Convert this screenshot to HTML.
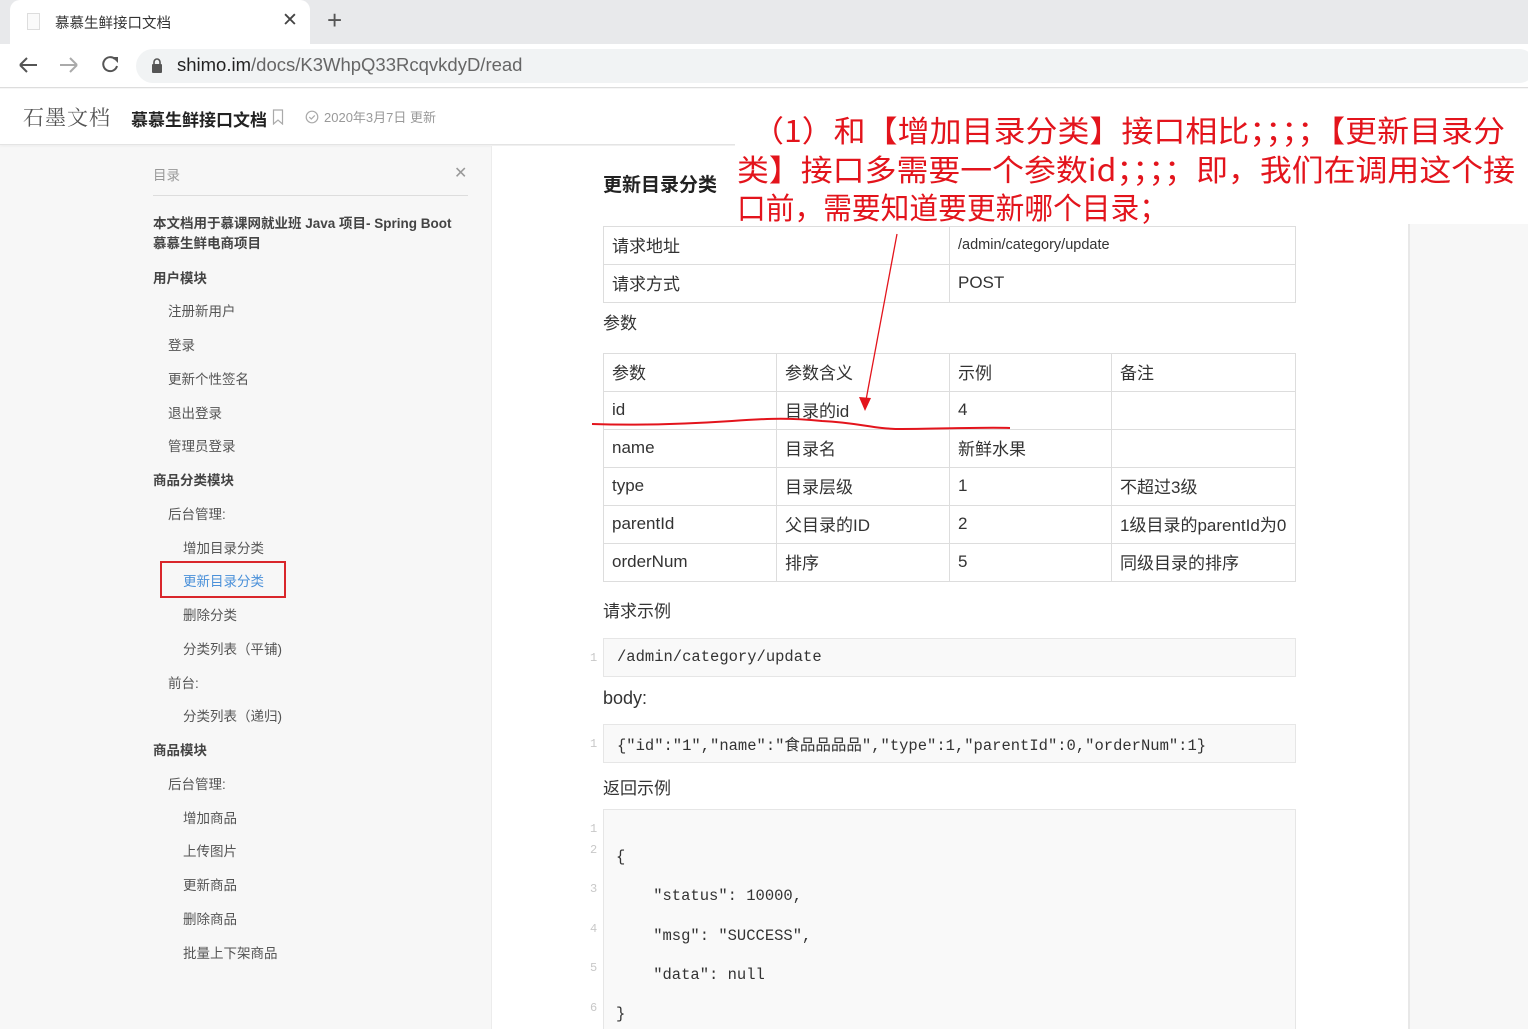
<!DOCTYPE html>
<html><head><meta charset="utf-8"><style>
*{margin:0;padding:0;box-sizing:border-box}
html,body{width:1528px;height:1029px;overflow:hidden}
body{position:relative;background:#f7f7f7;font-family:"Liberation Sans","Noto Sans CJK SC",sans-serif;color:#333}
.a{position:absolute;white-space:nowrap}
.side{font-size:13.5px;color:#555}
.sb{font-weight:bold;color:#444}
table{position:absolute;border-collapse:collapse;font-size:17px;color:#333}
td{border:1px solid #ddd;padding:0 8px 2px;height:38px;vertical-align:middle}
.code{position:absolute;left:603px;width:693px;background:#f9f9f9;border:1px solid #e6e6e6;font-family:"Liberation Mono","Noto Sans CJK SC",monospace;font-size:15.5px;color:#333}
.ln{position:absolute;left:590px;font-family:"Liberation Mono",monospace;font-size:12px;color:#c8c8c8}
</style></head><body>
<div class="a" style="left:0;top:0;width:1528px;height:44px;background:#e8e9eb"></div>
<div class="a" style="left:10px;top:0;width:300px;height:44px;background:#fff;border-radius:10px 10px 0 0"></div>
<div class="a" style="left:27px;top:13px;width:13px;height:17px;border:1px solid #ddd;background:#fafafa"></div>
<div class="a" style="left:55px;top:12px;font-size:14.5px;color:#333">慕慕生鲜接口文档</div>
<div class="a" style="left:282px;top:9px;font-size:19px;color:#444">✕</div>
<div class="a" style="left:327px;top:5px;font-size:26px;color:#555">+</div>
<div class="a" style="left:0;top:44px;width:1528px;height:44px;background:#fff;border-bottom:1px solid #ddd"></div>
<svg class="a" style="left:16px;top:54px" width="110" height="22"><path d="M4 11h17M4 11l7-7M4 11l7 7" stroke="#555" stroke-width="2" fill="none"/><path d="M44 11h17M61 11l-7-7M61 11l-7 7" stroke="#aaa" stroke-width="2" fill="none"/><path d="M99 5a7 7 0 1 0 2 7" stroke="#555" stroke-width="2" fill="none"/><path d="M96 3h6v6z" fill="#555"/></svg>
<div class="a" style="left:136px;top:49px;width:1400px;height:34px;background:#f1f3f4;border-radius:17px"></div>
<svg class="a" style="left:151px;top:58px" width="12" height="16"><rect x="1" y="6" width="10" height="9" rx="1" fill="#555"/><path d="M3 7V4a3 3 0 0 1 6 0v3" stroke="#555" stroke-width="1.6" fill="none"/></svg>
<div class="a" style="left:177px;top:54px;font-size:18.5px;color:#222">shimo.im<span style="color:#666">/docs/K3WhpQ33RcqvkdyD/read</span></div>
<div class="a" style="left:0;top:89px;width:1528px;height:56px;background:#fff;border-bottom:1px solid #e4e4e4;box-shadow:0 1px 3px rgba(0,0,0,.05)"></div>
<div class="a" style="left:23px;top:102px;font-size:21px;color:#555;font-family:'Noto Serif CJK SC',serif;letter-spacing:1px">石墨文档</div>
<div class="a" style="left:131px;top:106px;font-size:17px;font-weight:bold;color:#222">慕慕生鲜接口文档</div>
<svg class="a" style="left:272px;top:109px" width="12" height="16"><path d="M1.5 1h9v14l-4.5-4-4.5 4z" stroke="#aaa" stroke-width="1.2" fill="none"/></svg>
<svg class="a" style="left:305px;top:110px" width="14" height="14"><circle cx="7" cy="7" r="5.8" stroke="#aaa" stroke-width="1.2" fill="none"/><path d="M4.3 7l2 2 3.5-3.6" stroke="#aaa" stroke-width="1.2" fill="none"/></svg>
<div class="a" style="left:324px;top:107px;font-size:13px;color:#999">2020年3月7日 更新</div>
<div class="a" style="left:491px;top:146px;width:919px;height:883px;background:#fff;border-left:1px solid #ececec;border-right:2px solid #e8e8e8"></div>
<div class="a side" style="left:153px;top:164px;color:#999">目录</div>
<div class="a" style="left:454px;top:163px;font-size:16px;color:#999">✕</div>
<div class="a" style="left:153px;top:195px;width:315px;height:1px;background:#ddd"></div>
<div class="a side sb" style="left:153px;top:214px;line-height:20px">本文档用于慕课网就业班 Java 项目- Spring Boot<br>慕慕生鲜电商项目</div>
<div class="a side sb" style="left:153px;top:267px">用户模块</div>
<div class="a side" style="left:168px;top:300px">注册新用户</div>
<div class="a side" style="left:168px;top:334px">登录</div>
<div class="a side" style="left:168px;top:368px">更新个性签名</div>
<div class="a side" style="left:168px;top:402px">退出登录</div>
<div class="a side" style="left:168px;top:435px">管理员登录</div>
<div class="a side sb" style="left:153px;top:469px">商品分类模块</div>
<div class="a side" style="left:168px;top:503px">后台管理:</div>
<div class="a side" style="left:183px;top:537px">增加目录分类</div>
<div class="a" style="left:160px;top:561px;width:126px;height:37px;border:2px solid #d9262b"></div>
<div class="a side" style="left:183px;top:570px;color:#4a90d9">更新目录分类</div>
<div class="a side" style="left:183px;top:604px">删除分类</div>
<div class="a side" style="left:183px;top:638px">分类列表（平铺)</div>
<div class="a side" style="left:168px;top:672px">前台:</div>
<div class="a side" style="left:183px;top:705px">分类列表（递归)</div>
<div class="a side sb" style="left:153px;top:739px">商品模块</div>
<div class="a side" style="left:168px;top:773px">后台管理:</div>
<div class="a side" style="left:183px;top:807px">增加商品</div>
<div class="a side" style="left:183px;top:840px">上传图片</div>
<div class="a side" style="left:183px;top:874px">更新商品</div>
<div class="a side" style="left:183px;top:908px">删除商品</div>
<div class="a side" style="left:183px;top:942px">批量上下架商品</div>
<div class="a" style="left:603px;top:170px;font-size:19px;font-weight:bold;color:#222">更新目录分类</div>
<table style="left:603px;top:226px;width:693px">
<tr><td style="width:346px">请求地址</td><td style="font-size:14.5px">/admin/category/update</td></tr>
<tr><td>请求方式</td><td>POST</td></tr></table>
<div class="a" style="left:603px;top:309px;font-size:17px">参数</div>
<table style="left:603px;top:353px;width:693px">
<tr><td style="width:173px">参数</td><td style="width:173px">参数含义</td><td style="width:162px">示例</td><td>备注</td></tr>
<tr><td>id</td><td>目录的id</td><td>4</td><td></td></tr>
<tr><td>name</td><td>目录名</td><td>新鲜水果</td><td></td></tr>
<tr><td>type</td><td>目录层级</td><td>1</td><td>不超过3级</td></tr>
<tr><td>parentId</td><td>父目录的ID</td><td>2</td><td>1级目录的parentId为0</td></tr>
<tr><td>orderNum</td><td>排序</td><td>5</td><td>同级目录的排序</td></tr></table>
<div class="a" style="left:603px;top:597px;font-size:17px">请求示例</div>
<div class="code" style="top:638px;height:39px;padding:9px 13px">/admin/category/update</div>
<div class="ln" style="top:651px">1</div>
<div class="a" style="left:603px;top:688px;font-size:18px">body:</div>
<div class="code" style="top:724px;height:39px;padding:8px 13px">{"id":"1","name":"食品品品品","type":1,"parentId":0,"orderNum":1}</div>
<div class="ln" style="top:737px">1</div>
<div class="a" style="left:603px;top:774px;font-size:17px">返回示例</div>
<div class="code" style="top:809px;height:220px;border-bottom:none"></div>
<div class="ln" style="top:822px">1</div><div class="ln" style="top:843px">2</div><div class="ln" style="top:882px">3</div><div class="ln" style="top:922px">4</div><div class="ln" style="top:961px">5</div><div class="ln" style="top:1001px">6</div>
<div class="a" style="left:616px;top:838px;font-family:'Liberation Mono',monospace;font-size:15.5px;line-height:39.3px;white-space:pre">{
    "status": 10000,
    "msg": "SUCCESS",
    "data": null
}</div>
<div class="a" style="left:735px;top:110px;width:793px;height:114px;background:#fff"></div>
<svg class="a" style="left:0;top:0" width="1528" height="1029">
<g fill="#e3141c" font-family="'Noto Sans CJK SC',sans-serif" font-size="30">
<text x="752" y="142" textLength="753" lengthAdjust="spacingAndGlyphs">（1）和【增加目录分类】接口相比；；；；【更新目录分</text>
<text x="737" y="181" textLength="778" lengthAdjust="spacingAndGlyphs">类】接口多需要一个参数id；；；；即，我们在调用这个接</text>
<text x="737" y="219" textLength="431" lengthAdjust="spacingAndGlyphs">口前，需要知道要更新哪个目录；</text>
</g>
<path d="M897 234L866 400" stroke="#e3141c" stroke-width="1.3" fill="none"/>
<path d="M859 397l6 14 6-13z" fill="#e3141c"/>
<path d="M592 424c60 2 110-1 140-3 40-3 60-3 90 0 40 2 50 8 80 8 40 0 80-2 108-1" stroke="#e3141c" stroke-width="2" fill="none"/>
</svg>
</body></html>
